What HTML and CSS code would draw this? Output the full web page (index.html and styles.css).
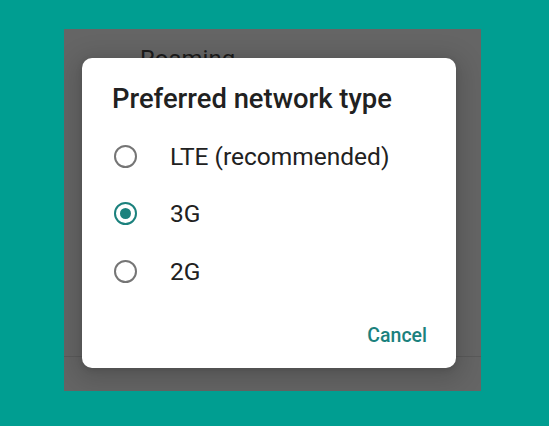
FILE: index.html
```html
<!DOCTYPE html>
<html>
<head>
<meta charset="utf-8">
<link rel="stylesheet" href="styles.css">
</head>
<body>
<div class="screen">
  <div class="behind">
    <div class="behind-item">Roaming</div>
    <div class="behind-divider"></div>
  </div>
  <div class="dialog">
    <h1 class="title">Preferred network type</h1>
    <ul class="options">
      <li class="option"><span class="radio"></span><span class="label">LTE (recommended)</span></li>
      <li class="option"><span class="radio checked"></span><span class="label">3G</span></li>
      <li class="option"><span class="radio"></span><span class="label">2G</span></li>
    </ul>
    <div class="actions"><button class="btn">Cancel</button></div>
  </div>
</div>
</body>
</html>
```
FILE: styles.css
```css
html, body { margin: 0; padding: 0; }
body {
  background: #009e91;
  width: 549px;
  height: 426px;
  overflow: hidden;
  font-family: Roboto, "Liberation Sans", sans-serif;
}
.screen {
  position: relative;
  margin: 29px 0 0 64px;
  width: 417px;
  height: 362px;
  background: #656565;
  overflow: hidden;
}
.behind {
  display: flex;
  flex-direction: column;
  height: 100%;
}
.behind-item {
  padding: 16px 0 0 76px;
  font-size: 24px;
  color: #1c1c1c;
  line-height: 28px;
}
.behind-divider {
  margin-top: auto;
  margin-bottom: 34px;
  height: 1px;
  background: #5a5a5a;
}
.dialog {
  position: absolute;
  left: 18px;
  top: 29px;
  width: 374px;
  height: 310px;
  box-sizing: border-box;
  background: #fff;
  border-radius: 10px;
  box-shadow: 0 6px 24px 8px rgba(0,0,0,0.14), 0 2px 6px rgba(0,0,0,0.12);
  display: flex;
  flex-direction: column;
}
.title {
  margin: 0;
  padding: 25px 0 0 30px;
  font-size: 27.4px;
  font-weight: 500;
  line-height: 32px;
  color: #212121;
}
.options {
  list-style: none;
  margin: 0;
  padding: 17px 0 0 0;
  display: flex;
  flex-direction: column;
  gap: 9.5px;
}
.option {
  display: flex;
  align-items: center;
  height: 48px;
  padding-left: 32px;
}
.radio {
  width: 23px;
  height: 23px;
  box-sizing: border-box;
  border: 2.5px solid #757575;
  border-radius: 50%;
  position: relative;
  flex: none;
}
.radio.checked {
  border-color: #1b817d;
}
.radio.checked::after {
  content: "";
  position: absolute;
  left: 3.5px;
  top: 3.5px;
  width: 11px;
  height: 11px;
  border-radius: 50%;
  background: #1b817d;
}
.label {
  margin-left: 33px;
  font-size: 24.5px;
  color: #212121;
}
.actions {
  margin-top: auto;
  display: flex;
  justify-content: flex-end;
  padding: 0 29px 20px 0;
}
.btn {
  border: 0;
  background: none;
  padding: 0;
  font-family: inherit;
  font-size: 19.5px;
  font-weight: 500;
  color: #1b817d;
  line-height: 24px;
}
```
